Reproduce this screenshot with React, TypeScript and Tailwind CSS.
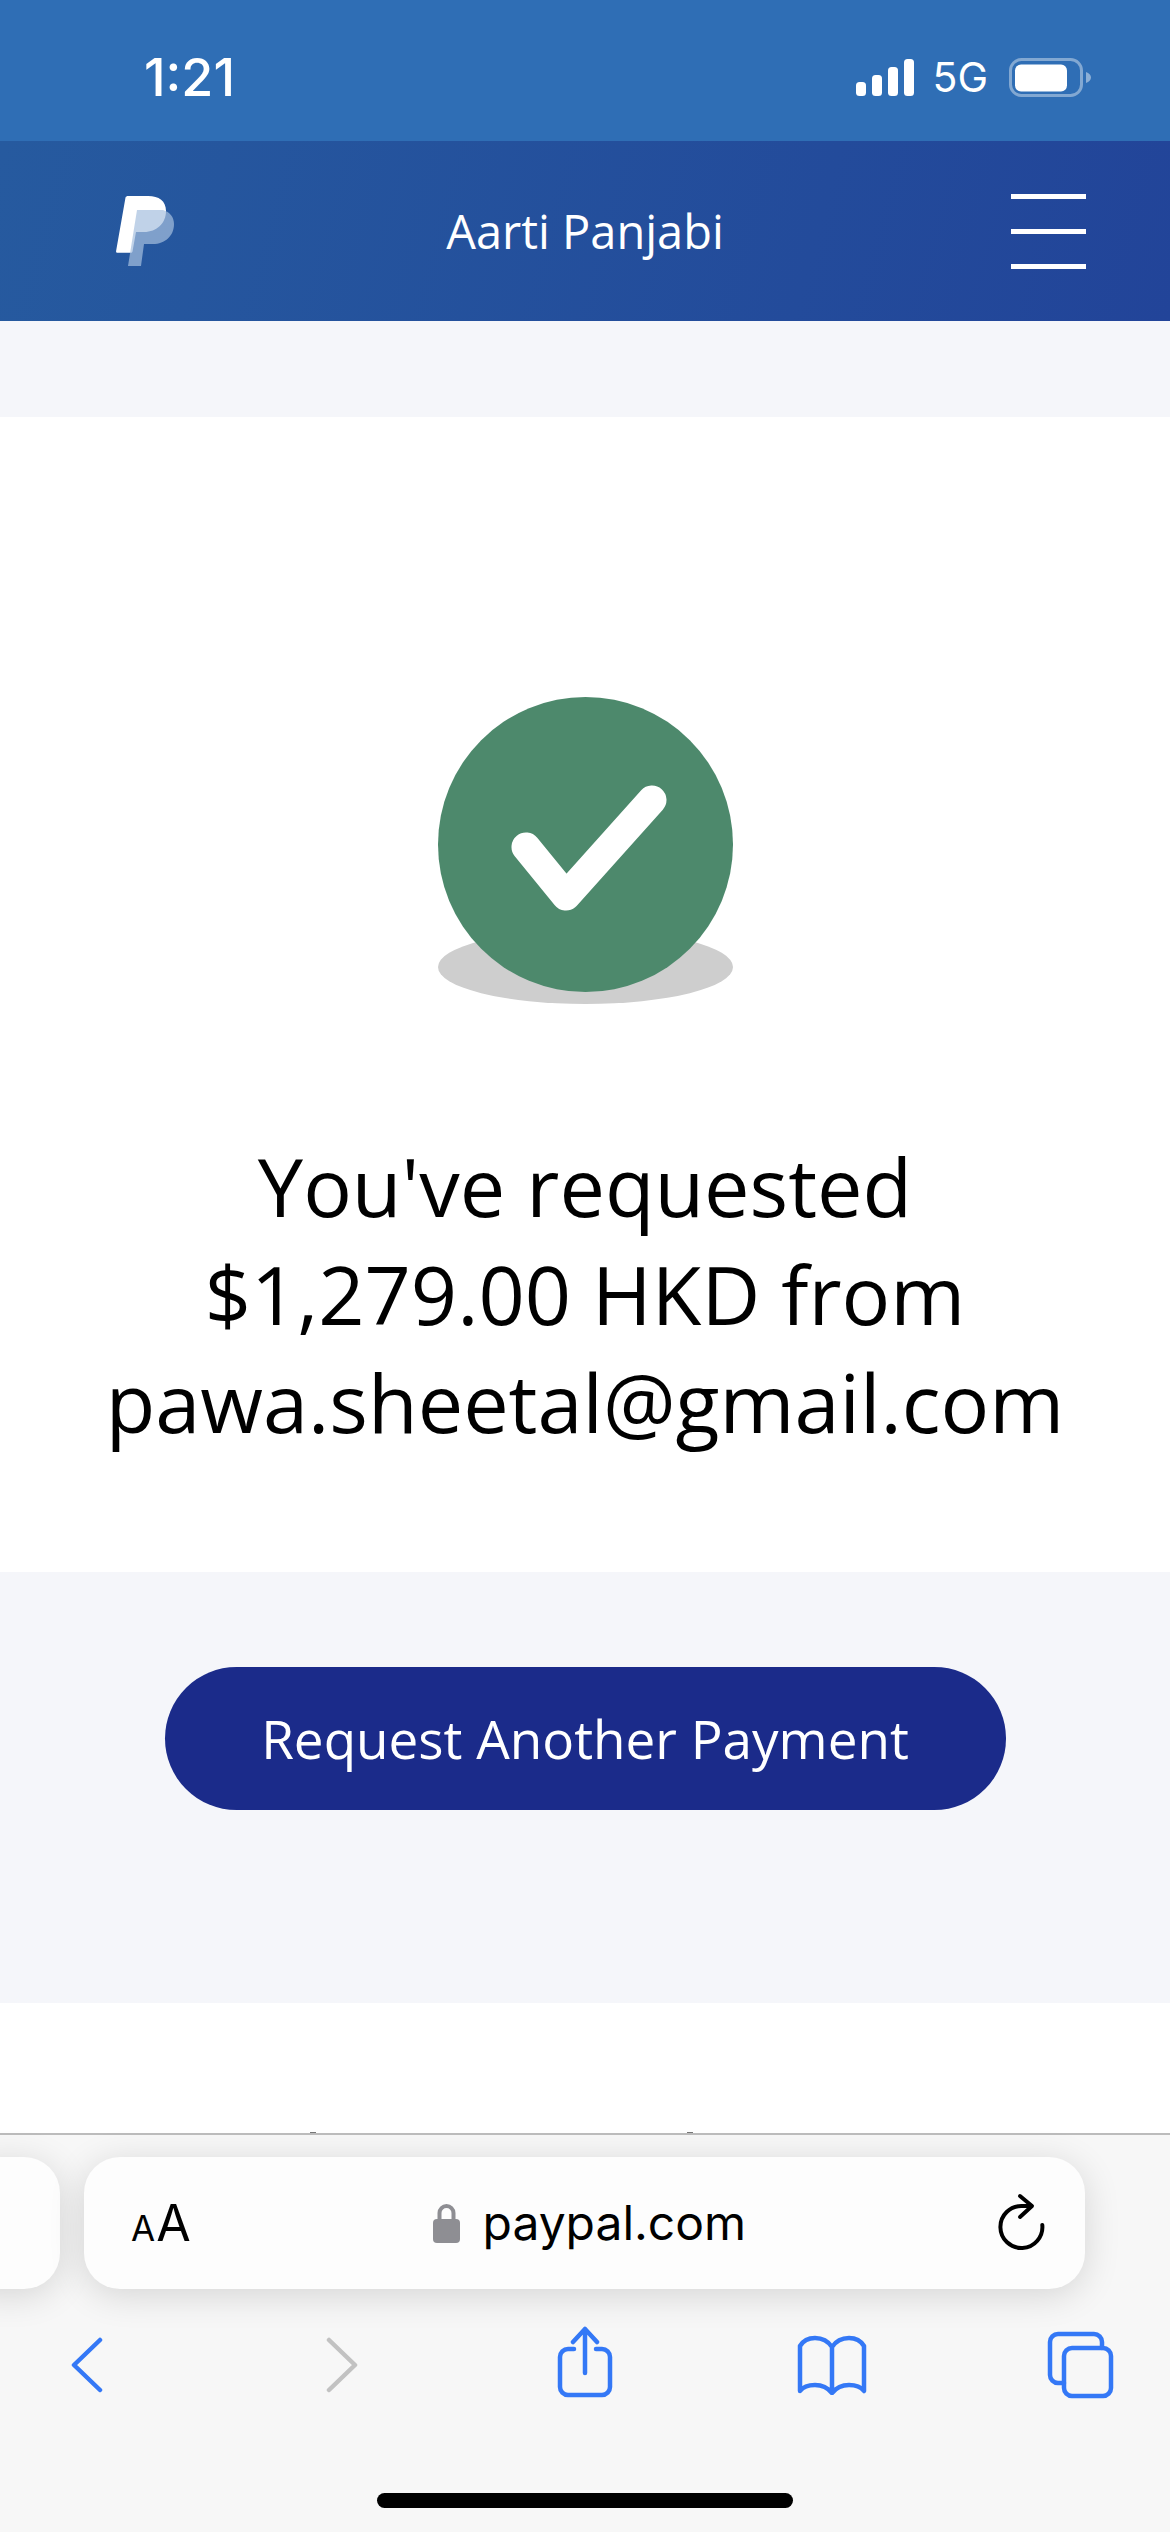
const sans = "font-['Open_Sans',sans-serif]";
const system = "font-['Inter',sans-serif]";

function SignalIcon() {
    return (
        <svg width="58" height="38" viewBox="0 0 58 38" fill="#fff">
            <rect x="0" y="24" width="10" height="14" rx="3.5" />
            <rect x="16" y="17" width="10" height="21" rx="3.5" />
            <rect x="32" y="9" width="10" height="29" rx="3.5" />
            <rect x="48" y="1" width="10" height="37" rx="3.5" />
        </svg>
    );
}

function BatteryIcon() {
    return (
        <svg width="84" height="40" viewBox="0 0 84 40">
            <rect x="1.5" y="1.5" width="71" height="36" rx="11" fill="none" stroke="#fff" strokeOpacity="0.4" strokeWidth="3" />
            <rect x="6" y="6.5" width="52" height="27" rx="6" fill="#fff" />
            <path d="M77 14c3 1 5 3 5 5.500s-2 4.500-5 5.500z" fill="#fff" fillOpacity="0.45" />
        </svg>
    );
}

function PayPalLogo() {
    return (
        <svg width="58" height="70" viewBox="0 0 58 70">
            <path d="M9.500 1.500C10 .5 11 0 12 0h20c11 0 18 5 18 15 0 12-9 21-22 21H20l-3.500 19.500c-.2.800-.8 1.300-1.600 1.300H1.500c-1 0-1.600-.8-1.400-1.800z" fill="#fff" />
            <path d="M21 14h26c7 2 11 7 11 14 0 12-9 20-21 20h-9l-3 22H12z" fill="#a5bfde" fillOpacity="0.7" />
        </svg>
    );
}

function CheckBadge() {
    return (
        <svg width="295" height="308" viewBox="0 0 295 308">
            <ellipse cx="147.500" cy="270" rx="147.500" ry="37" fill="#cecece" />
            <circle cx="147.500" cy="147.500" r="147.500" fill="#4d896c" />
            <path d="M88 150l40 49 86-96" fill="none" stroke="#fff" strokeWidth="29" strokeLinecap="round" strokeLinejoin="round" />
        </svg>
    );
}

function ToolbarIcon({ width, height, className, color = '#3478f6', children }: { width: number; height: number; className?: string; color?: string; children: React.ReactNode }) {
    return (
        <svg width={width} height={height} viewBox={`0 0 ${width} ${height}`} className={className} fill="none" stroke={color} strokeWidth="4.500" strokeLinecap="round" strokeLinejoin="round">
            {children}
        </svg>
    );
}

export default function App() {
    return (
        <div className={`flex h-[2532px] w-[1170px] flex-col overflow-hidden bg-white ${sans}`}>
            {/* Status bar */}
            <div className="flex h-[141px] items-start justify-between bg-[#2f6eb5] pl-[144px] pr-[77px] pt-[50px]">
                <span className={`text-[52px] leading-[56px] font-medium text-white ${system}`}>1:21</span>
                <div className="flex items-start pt-[8px]">
                    <SignalIcon />
                    <span className={`ml-[18px] mt-[-3px] text-[41px] leading-[44px] text-white ${system}`}>5G</span>
                    <div className="ml-[21px]">
                        <BatteryIcon />
                    </div>
                </div>
            </div>

            {/* PayPal header */}
            <div className="flex h-[180px] items-center bg-linear-105 from-[#265a9f] to-[#224499] px-[84px]">
                <div className="flex-1">
                    <div className="ml-[32px]">
                        <PayPalLogo />
                    </div>
                </div>
                <span className="text-[47px] leading-[56px] text-white">Aarti Panjabi</span>
                <div className="flex flex-1 justify-end">
                    <div className="flex w-[75px] flex-col gap-[30px]">
                        <div className="h-[5px] bg-white" />
                        <div className="h-[5px] bg-white" />
                        <div className="h-[5px] bg-white" />
                    </div>
                </div>
            </div>

            <div className="h-[96px] bg-[#f5f6fa]" />

            {/* Confirmation */}
            <div className="flex h-[1155px] flex-col items-center bg-white pt-[280px]">
                <CheckBadge />
                <h1 className="mt-[127px] text-center text-[81px] leading-[108px] font-normal text-black">
                    You've requested
                    <br />
                    $1,279.00 HKD from
                    <br />
                    pawa.sheetal@gmail.com
                </h1>
            </div>

            <div className="flex h-[431px] justify-center bg-[#f5f6fa] pt-[95px]">
                <button className="h-[143px] w-[841px] rounded-full bg-[#1b2b8a] text-[53px] text-white">Request Another Payment</button>
            </div>

            <div className="h-[130px] bg-white" />

            {/* Safari toolbar */}
            <div className="relative flex flex-1 flex-col border-t-2 border-[#bcbcbc] bg-[#f7f7f7] pt-[22px]">
                <div className="absolute left-[310px] top-[-3px] h-[1px] w-[6px] bg-[#777]" />
                <div className="absolute left-[687px] top-[-3px] h-[1px] w-[6px] bg-[#777]" />
                <div className="flex gap-[24px]">
                    <div className="ml-[-40px] h-[132px] w-[100px] rounded-[36px] bg-[#fdfdfd] shadow-[0_6px_36px_rgba(0,0,0,0.14)]" />
                    <div className={`flex h-[132px] w-[1001px] items-center justify-between rounded-[36px] bg-[#fdfdfd] pl-[47px] pr-[39px] text-black shadow-[0_6px_36px_rgba(0,0,0,0.14)] ${system}`}>
                        <span className="flex items-baseline leading-none">
                            <span className="text-[35px]">A</span>
                            <span className="ml-[1px] text-[50px]">A</span>
                        </span>
                        <span className="mr-[12px] flex items-center gap-[23px] text-[48px] leading-none">
                            <svg width="27" height="40" viewBox="0 0 27 40">
                                <path d="M6.500 18v-8a7 7 0 0 1 14 0v8" fill="none" stroke="#8e8e93" strokeWidth="4" />
                                <rect x="0" y="16" width="27" height="24" rx="4" fill="#8e8e93" />
                            </svg>
                            paypal.com
                        </span>
                        <svg width="46" height="54" viewBox="0 0 46 54" className="overflow-visible" fill="none" stroke="#000" strokeWidth="4" strokeLinecap="round" strokeLinejoin="round">
                            <path d="M31 10H22A21 21 0 1 0 42.300 29" />
                            <path d="M20 0L32 10 20 21" />
                        </svg>
                    </div>
                </div>

                <div className="mt-[37px] flex h-[72px] items-start pl-[71px]">
                    <ToolbarIcon width={32} height={56} className="mt-[11px]">
                        <path d="M29 3L3 28l26 25" />
                    </ToolbarIcon>
                    <ToolbarIcon width={32} height={56} color="#c2c2c2" className="ml-[223px] mt-[11px]">
                        <path d="M3 3l26 25L3 53" />
                    </ToolbarIcon>
                    <ToolbarIcon width={56} height={72} className="ml-[199px]">
                        <path d="M17 23h-6a8 8 0 0 0-8 8v30a8 8 0 0 0 8 8h34a8 8 0 0 0 8-8V31a8 8 0 0 0-8-8h-6" />
                        <path d="M28 47V3M16 16L28 3l12 13" />
                    </ToolbarIcon>
                    <ToolbarIcon width={70} height={60} className="ml-[184px] mt-[9px]">
                        <path d="M35 12C31 6 25 3 18 3 11 3 6 6 3 11v45c3-4 9-6 15-6 7 0 13 3 17 8 4-5 10-8 17-8 6 0 12 2 15 6V11C64 6 59 3 52 3c-7 0-13 3-17 9v46" />
                    </ToolbarIcon>
                    <ToolbarIcon width={68} height={68} className="ml-[179px] mt-[5px]">
                        <path d="M18 52h-6a8 8 0 0 1-8-8V11a8 8 0 0 1 8-8h36a8 8 0 0 1 8 8v6" />
                        <rect x="18" y="17" width="47" height="48" rx="8" />
                    </ToolbarIcon>
                </div>

                <div className="mt-[95px] flex justify-center">
                    <div className="h-[15px] w-[416px] rounded-full bg-black" />
                </div>
            </div>
        </div>
    );
}
